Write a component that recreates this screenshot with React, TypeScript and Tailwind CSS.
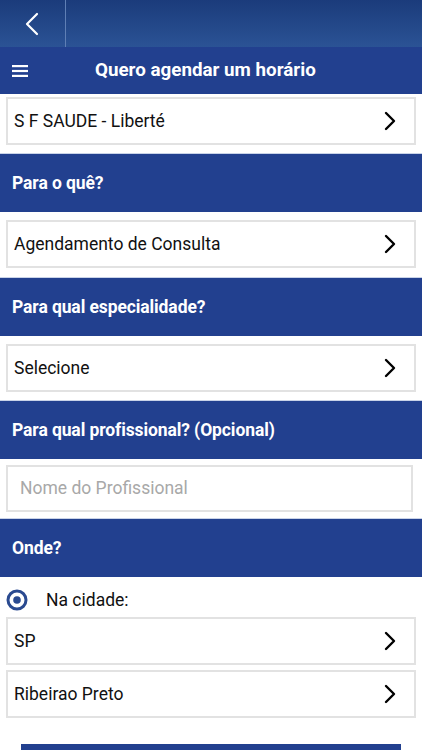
import React from "react";

const Chevron = () => (
  <svg width="14" height="20" viewBox="0 0 14 20" className="shrink-0">
    <path d="M3 2 L11 10 L3 18" fill="none" stroke="#000" strokeWidth="2.4" strokeLinecap="round" strokeLinejoin="round" />
  </svg>
);

const Row = ({ text }: { text: string }) => (
  <div className="mx-[6px] flex h-[48px] items-center justify-between border-2 border-[#e2e2e2] bg-white pl-[6px] pr-[17px]">
    <span className="text-[17.5px] text-[#111]">{text}</span>
    <Chevron />
  </div>
);

const Header = ({ text }: { text: string }) => (
  <div className="flex h-[59px] items-center bg-[#22408f] pl-[12px] border-t border-[#c9d3e8]">
    <span className="text-[17.5px] font-bold tracking-[-0.1px] text-white">{text}</span>
  </div>
);

export default function App() {
  return (
    <div className="h-[750px] w-[422px] overflow-hidden bg-white" style={{ fontFamily: "Roboto, 'Liberation Sans', sans-serif" }}>
      <div className="flex h-[47px] bg-gradient-to-b from-[#1b3b7b] to-[#2b5395]">
        <div className="flex w-[66px] items-center pl-[24px] border-r border-[#5f7fb5]">
          <svg width="16" height="24" viewBox="0 0 16 24">
            <path d="M13 2 L3 12 L13 22" fill="none" stroke="#fff" strokeWidth="2.2" strokeLinecap="round" strokeLinejoin="round" />
          </svg>
        </div>
      </div>
      <div className="flex h-[47px] items-center bg-[#22408f]">
        <svg width="16" height="12" viewBox="0 0 16 12" className="ml-[12px]">
          <rect x="0" y="0" width="16" height="2.2" fill="#fff" />
          <rect x="0" y="4.9" width="16" height="2.2" fill="#fff" />
          <rect x="0" y="9.8" width="16" height="2.2" fill="#fff" />
        </svg>
        <span className="ml-[67px] text-[18.8px] font-bold text-white">Quero agendar um horário</span>
      </div>
      <div className="h-[3px]" />
      <Row text="S F SAUDE - Liberté" />
      <div className="h-[8px]" />
      <Header text="Para o quê?" />
      <div className="h-[8px]" />
      <Row text="Agendamento de Consulta" />
      <div className="h-[9px]" />
      <Header text="Para qual especialidade?" />
      <div className="h-[8px]" />
      <Row text="Selecione" />
      <div className="h-[8px]" />
      <Header text="Para qual profissional? (Opcional)" />
      <div className="h-[6px]" />
      <div className="ml-[6px] mr-[9px] flex h-[47px] items-center border-2 border-[#e2e2e2] bg-white pl-[12px]">
        <span className="text-[17.5px] text-[#a8a8a8]">Nome do Profissional</span>
      </div>
      <div className="h-[6px]" />
      <Header text="Onde?" />
      <div className="flex h-[40px] items-center pl-[6px] pt-[6px]">
        <svg width="22" height="22" viewBox="0 0 22 22">
          <circle cx="11" cy="11" r="9" fill="none" stroke="#2a4a90" strokeWidth="3" />
          <circle cx="11" cy="11" r="3.8" fill="#2a4a90" />
        </svg>
        <span className="ml-[18px] text-[17.5px] text-[#111]">Na cidade:</span>
      </div>
      <Row text="SP" />
      <div className="h-[5px]" />
      <Row text="Ribeirao Preto" />
      <div className="h-[26px]" />
      <div className="mx-[21px] h-[20px] bg-[#22408f]" />
    </div>
  );
}
